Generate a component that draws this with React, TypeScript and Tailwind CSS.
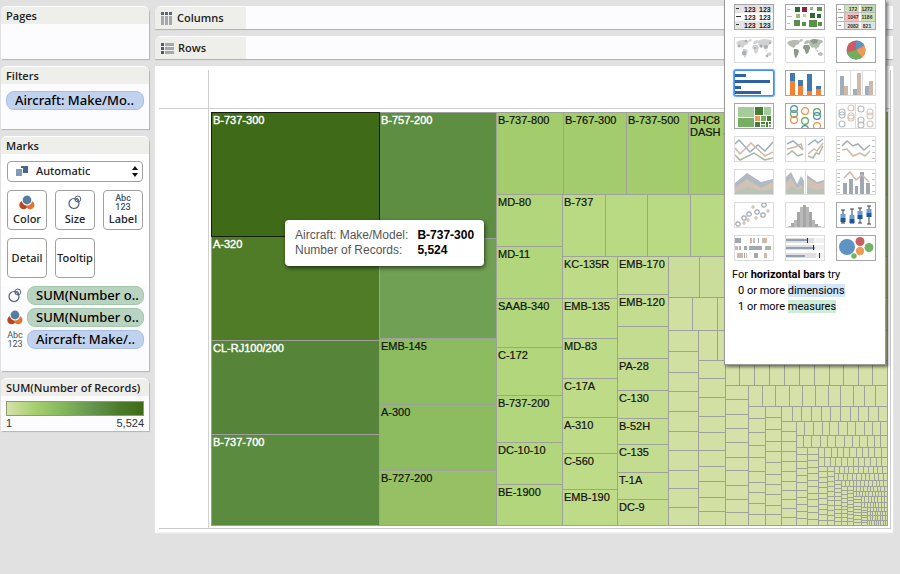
import React from "react";

/* ---------- Treemap data ---------- */

type Cell = {
  x: number;
  y: number;
  w: number;
  h: number;
  fill: string;
  label?: string[];
  light?: boolean;
};

const STROKE = "#9fa29b";
const TAIL = "#d5e1a8";

function stack(x0: number, x1: number, ys: number[], fills: string[], labels: string[] = [], light = false): Cell[] {
  return ys.slice(1).map((y, i) => ({
    x: x0,
    y: ys[i],
    w: x1 - x0,
    h: y - ys[i],
    fill: fills[Math.min(i, fills.length - 1)],
    label: labels[i] ? labels[i].split("|") : undefined,
    light,
  }));
}

function strip(y0: number, y1: number, xs: number[], fill: string, labels: string[] = []): Cell[] {
  return xs.slice(1).map((x, i) => ({
    x: xs[i],
    y: y0,
    w: x - xs[i],
    h: y1 - y0,
    fill,
    label: labels[i] ? labels[i].split("|") : undefined,
  }));
}

function even(from: number, to: number, count: number): number[] {
  return Array.from({ length: count + 1 }, (_, i) => Math.round(from + ((to - from) * i) / count));
}

const R = 676;
const B = 413;

const cells: Cell[] = [
  ...stack(0, 168, [0, 124, 228, 322, B], ["#3f6b18", "#507c28", "#568438", "#5b8b3f"], ["B-737-300", "A-320", "CL-RJ100/200", "B-737-700"], true),
  ...stack(168, 285, [0, 126, 226], ["#5e8e42", "#70a053"], ["B-757-200"], true),
  ...stack(168, 285, [226, 292, 358, B], ["#8dbb60", "#8dbb60", "#95c164"], ["EMB-145", "A-300", "B-727-200"]),
  ...strip(0, 82, [285, 352, 415, 477, 538, 608, R], "#a3cc6d", ["B-737-800", "B-767-300", "B-737-500", "DHC8|DASH 8"]),
  ...stack(285, 351, [82, 134, 186, 235, 283, 330, 372, B], ["#b1d67b"], ["MD-80", "MD-11", "SAAB-340", "C-172", "B-737-200", "DC-10-10", "BE-1900"]),
  ...strip(82, 144, [351, 394, 436, 479, 522, 564, 606, 641, R], "#bad983", ["B-737"]),
  ...stack(351, 406, [144, 186, 226, 266, 305, 341, 377, B], ["#bedb88"], ["KC-135R", "EMB-135", "MD-83", "C-17A", "A-310", "C-560", "EMB-190"]),
  ...stack(406, 457, [144, 182, 214, 246, 278, 306, 332, 360, 387, B], ["#c3dc90"], ["EMB-170", "EMB-120", "", "PA-28", "C-130", "B-52H", "C-135", "T-1A", "DC-9"]),
  ...strip(144, 185, even(457, R, 7), "#cadd9a"),
  ...strip(185, 218, even(457, R, 9), "#cfe0a0"),
  ...stack(457, 487, [218, 239, 260, 279, 299, 319, 338, 358, 376, 395, B], ["#d0e0a2"]),
  ...strip(218, 248, even(487, R, 10), "#d2e0a4"),
  ...stack(487, 514, [248, 266, 285, 304, 320, 338, 354, 369, 385, 399, B], ["#d2e0a4"]),
  ...strip(248, 273, [514, 528, 543, 558, 573, 588, 603, 618, 632, 647, 661, R], TAIL),
  ...stack(514, 537, [273, 287, 302, 316, 330, 345, 358, 373, 387, 400, B], [TAIL]),
  ...strip(273, 294, [537, 551, 564, 578, 591, 604, 617, 629, 642, 653, 664, R], TAIL),
  ...stack(537, 554, [294, 306, 320, 333, 345, 359, 370, 380, 391, 402, B], [TAIL]),
  ...stack(554, 570, [294, 305, 317, 329, 339, 350, 362, 372, 382, 393, 402, B], [TAIL]),
  ...strip(294, 309, [570, 581, 590, 600, 610, 619, 629, 639, 647, 657, 667, R], TAIL),
  ...stack(570, 585, [309, 319, 329, 339, 349, 359, 369, 378, 387, 396, 405, B], [TAIL]),
  ...strip(309, 323, [585, 593, 602, 611, 618, 627, 636, 644, 653, 661, 669, R], TAIL),
  ...strip(323, 335, [585, 592, 600, 609, 616, 624, 633, 641, 648, 656, 663, 669, R], TAIL),
  ...stack(585, 596, even(335, B, 11), [TAIL]),
  ...stack(596, 607, even(335, B, 12), [TAIL]),
  ...strip(335, 345, even(607, R, 11), TAIL),
  ...strip(345, 354, even(607, R, 12), TAIL),
  ...stack(607, 616, even(354, B, 11), [TAIL]),
  ...stack(616, 623, even(354, B, 12), [TAIL]),
  ...strip(354, 361, even(623, R, 11), TAIL),
  ...strip(361, 368, even(623, R, 12), TAIL),
  ...stack(623, 630, even(368, B, 11), [TAIL]),
  ...strip(368, 374, even(630, R, 12), TAIL),
  ...stack(630, 636, even(374, B, 10), [TAIL]),
  ...stack(636, 642, even(374, B, 11), [TAIL]),
  ...strip(374, 379, even(642, R, 10), TAIL),
  ...strip(379, 384, even(642, R, 11), TAIL),
  ...stack(642, 650, even(384, B, 9), [TAIL]),
  ...strip(384, 390, even(650, R, 8), TAIL),
  ...strip(390, 395, even(650, R, 9), TAIL),
  ...stack(650, 656, even(395, B, 7), [TAIL]),
  ...strip(395, 399, even(656, R, 7), TAIL),
  ...strip(399, 403, even(656, R, 8), TAIL),
  ...strip(403, 408, even(656, R, 8), TAIL),
  ...strip(408, B, even(656, R, 9), TAIL),
];

function Treemap() {
  return (
    <svg viewBox="0 0 677 414" className="block h-auto w-full font-['Liberation_Sans',Arial,sans-serif]" role="img" aria-label="Number of records by aircraft make and model">
      <g shapeRendering="crispEdges" stroke={STROKE}>
        {cells.map((c, i) => (
          <rect key={i} x={c.x + 0.5} y={c.y + 0.5} width={c.w} height={c.h} fill={c.fill} />
        ))}
        <rect x={0.5} y={0.5} width={168} height={124} fill="none" stroke="#14200a" />
      </g>
      {cells.map((c, i) =>
        (c.label ?? []).map((line, n) => (
          <text key={`${i}-${n}`} x={c.x + 2} y={c.y + 12 + n * 12} fontSize={11} fill={c.light ? "#ffffff" : "#111111"} stroke={c.light ? "#ffffff" : "#111111"} strokeWidth={c.light ? 0.4 : 0.2}>
            {line}
          </text>
        )),
      )}
    </svg>
  );
}

/* ---------- Small icons ---------- */

function ColorIcon() {
  return (
    <svg width="16" height="15" viewBox="0 0 16 15" aria-hidden="true">
      <circle cx="4.6" cy="10" r="4.3" fill="#b9461c" />
      <circle cx="11.2" cy="10" r="4.3" fill="#e07633" />
      <circle cx="8" cy="5.2" r="5.2" fill="#fff" />
      <circle cx="8" cy="5" r="4.4" fill="#557d9f" />
    </svg>
  );
}

function SizeIcon() {
  return (
    <svg width="14" height="15" viewBox="0 0 14 15" fill="none" stroke="#52627c" aria-hidden="true">
      <circle cx="6" cy="8.5" r="5" strokeWidth="1.2" />
      <circle cx="9.8" cy="4" r="3" />
      <circle cx="9" cy="5" r="1.6" strokeWidth="0.8" />
    </svg>
  );
}

function AbcIcon() {
  return (
    <span aria-hidden="true" className="block text-center font-['Roboto',sans-serif] text-[9px] leading-[9px] text-[#44546c]">
      Abc
      <br />
      123
    </span>
  );
}

function ColumnsIcon() {
  return (
    <svg width="12" height="13" viewBox="0 0 12 13" aria-hidden="true">
      {[0, 4, 8].map((x) => (
        <g key={x}>
          <rect x={x} y="0" width="3" height="3" fill="#5c6672" />
          <rect x={x} y="4" width="3" height="9" fill="#a3a8ae" />
        </g>
      ))}
    </svg>
  );
}

function RowsIcon() {
  return (
    <svg width="13" height="11" viewBox="0 0 13 11" aria-hidden="true">
      {[0, 4, 8].map((y) => (
        <g key={y}>
          <rect x="0" y={y} width="3" height="3" fill="#4d5a68" />
          <rect x="4" y={y} width="9" height="3" fill="#a3a8ae" />
        </g>
      ))}
    </svg>
  );
}

/* ---------- Chart thumbnails ---------- */

const dim = { blue: "#a1adb9", tan: "#cfb8a8", sage: "#a9b8a6", grey: "#a0a9b1" };

const LAND =
  "M2 6l2-2 4-1 4 0 3 1-1 3-3 1-2 3-2-1-2-1-2-2zM14 3l3-1 1 1-2 2zM9 12l3 0 2 2-1 3-2 4-1-1-1-4zM19 7l1-3 3-1 2 1-1 2-3 1zM19 8l5 0 1 3-2 5-2 1-1-4-2-2zM25 3l5-1 7 1 1 2-3 2-1 3-2 1-1 2-2-3-2 1-3-4zM33 16l3-1 2 2-2 2-3-1zM31 13l3 1-2 1z";

function zigzag(points: string, color: string) {
  return <polyline points={points} fill="none" stroke={color} strokeWidth="1.5" />;
}

function Dashes({ x, ys, color = "#c9bcb2" }: { x: number; ys: number[]; color?: string }) {
  return (
    <>
      {ys.map((y) => (
        <rect key={y} x={x} y={y} width="3" height="1" fill={color} />
      ))}
    </>
  );
}

function Ring({ x, y, c, r = 3.4 }: { x: number; y: number; c: string; r?: number }) {
  return <circle cx={x} cy={y} r={r} fill="none" stroke={c} strokeWidth="1.2" />;
}

type Block = [number, number, number, number, string];

function Blocks({ items }: { items: Block[] }) {
  return (
    <>
      {items.map(([x, y, w, h, f], i) => (
        <rect key={i} x={x} y={y} width={w} height={h} fill={f} />
      ))}
    </>
  );
}

const G1 = "#2d6a38";
const G2 = "#5a9148";
const G3 = "#98b97a";

type Thumb = { name: string; on: boolean; art: React.ReactNode };

const thumbs: Thumb[] = [
  {
    name: "text table",
    on: true,
    art: (
      <>
        <Blocks items={[[0, 0, 40, 9, "#e4e4e4"], [0, 17, 40, 9, "#e4e4e4"], [2, 4, 3, 1, "#333"], [2, 12, 5, 1, "#333"], [2, 20, 3, 1, "#333"]]} />
        {[8, 16, 24].map((y) => (
          <g key={y} fontSize="7" fontWeight="700" fill="#222">
            <text x="10" y={y}>123</text>
            <text x="25" y={y}>123</text>
          </g>
        ))}
      </>
    ),
  },
  {
    name: "heat map",
    on: true,
    art: (
      <Blocks
        items={[
          [2, 5, 3, 1, "#bbb"], [2, 12, 5, 1, "#bbb"], [2, 19, 3, 1, "#bbb"],
          [10, 3, 5, 5, G1], [17, 3, 5, 5, "#8c2342"], [25, 3, 3, 3, G3], [32, 3, 5, 4, G2],
          [11, 10, 4, 4, G3], [18, 10, 3, 3, "#bcd39c"], [25, 9, 5, 5, G1], [32, 10, 4, 4, G1],
          [9, 16, 6, 6, G2], [17, 18, 4, 4, G2], [24, 16, 8, 7, G2], [33, 18, 4, 4, G2],
        ]}
      />
    ),
  },
  {
    name: "highlight table",
    on: true,
    art: (
      <>
        <Blocks
          items={[
            [0, 8, 40, 1, "#bbb"], [0, 17, 40, 1, "#bbb"], [8, 0, 1, 26, "#bbb"],
            [9, 0, 14, 8, "#cfe3b8"], [25, 0, 15, 8, "#bfdcaa"], [9, 9, 14, 8, "#f2bfc3"], [25, 9, 15, 8, "#cfe3b8"],
            [9, 18, 14, 8, "#dcdcdc"], [25, 18, 15, 8, "#e2e2e2"],
            [2, 5, 3, 1, "#999"], [2, 13, 5, 1, "#999"], [2, 21, 3, 1, "#999"],
          ]}
        />
        <g fontSize="5" fontWeight="700" fill="#333" textAnchor="middle">
          <text x="17" y="7">172</text>
          <text x="31" y="7">1272</text>
          <text x="17" y="15">1047</text>
          <text x="31" y="15">1186</text>
          <text x="17" y="24">2082</text>
          <text x="31" y="24">821</text>
        </g>
      </>
    ),
  },
  {
    name: "symbol map",
    on: false,
    art: (
      <>
        <path d={LAND} fill="#d2d2d2" />
        {[[5, 9, 1.6], [10, 16, 2.2], [12, 4, 1.2], [27, 9, 1.6], [32, 10, 2], [36, 6, 1.2], [33, 19, 1.4], [21, 11, 1]].map(([x, y, r]) => (
          <circle key={`${x}-${y}`} cx={x} cy={y} r={r} fill="#9aa5ae" fillOpacity="0.8" />
        ))}
      </>
    ),
  },
  {
    name: "filled map",
    on: false,
    art: (
      <>
        <path d={LAND} fill="#b4bbb0" />
        <path d="M9 12l3 0 2 2-1 3-2 4-1-1-1-4zM19 8l5 0 1 3-2 5-2 1-1-4-2-2zM25 3l5-1 3 1-1 3-4 1z" fill="#8c9a88" />
      </>
    ),
  },
  {
    name: "pie chart",
    on: true,
    art: (
      <>
        <circle cx="20" cy="13" r="9.5" fill="#c95d61" />
        <path d="M20 13V3.500A9.500 9.500 0 0 1 28.300 8.400z" fill="#5f93c4" />
        <path d="M20 13L28.300 8.400A9.500 9.500 0 0 1 26 20.400z" fill="#f09a57" />
        <path d="M20 13L26 20.400A9.500 9.500 0 0 1 10.800 15.300z" fill="#6db05f" />
      </>
    ),
  },
  {
    name: "horizontal bars",
    on: true,
    art: <Blocks items={[[1, 4, 11, 3, "#2e62a5"], [1, 10, 35, 3, "#2e62a5"], [1, 16, 6, 3, "#2e62a5"], [1, 21, 26, 3, "#2e62a5"]]} />,
  },
  {
    name: "stacked bars",
    on: true,
    art: (
      <Blocks
        items={[
          [5, 3, 5, 8, "#4078b0"], [5, 11, 5, 15, "#f08236"],
          [13, 10, 5, 6, "#4078b0"], [13, 16, 5, 10, "#f08236"],
          [22, 4, 5, 17, "#4078b0"], [22, 21, 5, 5, "#f08236"],
          [31, 16, 5, 3, "#4078b0"], [31, 19, 5, 7, "#f08236"],
        ]}
      />
    ),
  },
  {
    name: "side-by-side bars",
    on: false,
    art: (
      <Blocks
        items={[
          [14, 0, 1, 26, "#ddd"], [26, 0, 1, 26, "#ddd"],
          [4, 6, 4, 20, dim.blue], [8, 16, 4, 10, dim.tan],
          [17, 19, 4, 7, dim.blue], [21, 3, 4, 23, dim.tan],
          [29, 16, 4, 10, dim.blue], [33, 11, 4, 15, dim.tan],
        ]}
      />
    ),
  },
  {
    name: "treemap",
    on: true,
    art: (
      <Blocks
        items={[
          [4, 4, 16, 10, "#a5cd9a"], [4, 15, 16, 9, "#76ae64"], [21, 4, 8, 8, "#467d35"], [30, 4, 7, 8, "#a5cd9a"],
          [21, 13, 5, 5, "#f09a57"], [21, 19, 5, 5, "#467d35"], [27, 13, 5, 5, "#76ae64"], [33, 13, 4, 5, "#467d35"],
          [27, 19, 4, 2, "#467d35"], [27, 22, 4, 2, "#76ae64"], [32, 19, 2, 5, "#467d35"], [35, 19, 2, 2, "#467d35"], [35, 22, 2, 2, "#76ae64"],
        ]}
      />
    ),
  },
  {
    name: "circle views",
    on: true,
    art: (
      <>
        <Ring x={9} y={6} c="#4d8bbd" />
        <Ring x={9} y={11} c="#5aa653" />
        <Ring x={9} y={17} c="#f0924a" />
        <Ring x={20} y={8} c="#f0924a" />
        <Ring x={20} y={18} c="#5aa653" />
        <Ring x={20} y={26} c="#4d8bbd" />
        <Ring x={32} y={9} c="#5aa653" />
        <Ring x={32} y={13} c="#4d8bbd" />
        <Ring x={32} y={23} c="#f0924a" />
      </>
    ),
  },
  {
    name: "side-by-side circles",
    on: false,
    art: (
      <>
        <rect x="19" y="0" width="1" height="26" fill="#ddd" />
        <Ring x={6} y={9} c="#b3bcc4" r={3} />
        <Ring x={6} y={12} c="#b3bcc4" r={3} />
        <Ring x={6} y={21} c="#b3bcc4" r={3} />
        <Ring x={15} y={5} c="#d8c7bb" r={3} />
        <Ring x={15} y={13} c="#d8c7bb" r={3} />
        <Ring x={15} y={15} c="#d8c7bb" r={3} />
        <Ring x={25} y={6} c="#b3bcc4" r={3} />
        <Ring x={25} y={17} c="#b3bcc4" r={3} />
        <Ring x={25} y={22} c="#b3bcc4" r={3} />
        <Ring x={34} y={9} c="#d8c7bb" r={3} />
        <Ring x={34} y={13} c="#d8c7bb" r={3} />
        <Ring x={34} y={21} c="#d8c7bb" r={3} />
      </>
    ),
  },
  {
    name: "continuous lines",
    on: false,
    art: (
      <>
        {zigzag("1,8 5,4 16,16 24,9 31,15 39,6", dim.blue)}
        {zigzag("1,12 6,18 17,7 31,20 39,16", dim.tan)}
        {zigzag("1,19 6,24 20,17 31,24 39,22", dim.sage)}
      </>
    ),
  },
  {
    name: "discrete lines",
    on: false,
    art: (
      <>
        <rect x="20" y="0" width="1" height="26" fill="#ddd" />
        {zigzag("2,8 8,5 13,9 18,14", dim.blue)}
        {zigzag("2,13 10,11 16,8 18,14", dim.tan)}
        {zigzag("2,19 7,15 13,20 18,18", dim.sage)}
        {zigzag("23,9 30,4 33,7 38,3", dim.blue)}
        {zigzag("23,18 29,13 32,15 38,7", dim.tan)}
        {zigzag("23,20 28,22 31,17 34,18 38,10", dim.sage)}
      </>
    ),
  },
  {
    name: "dual lines",
    on: false,
    art: (
      <>
        <Dashes x={1} ys={[4, 8, 12, 16, 20, 23]} />
        <Dashes x={36} ys={[4, 10, 16, 22]} color="#bfc5cb" />
        {zigzag("6,10 11,5 17,10 22,8 28,14 34,9", dim.blue)}
        {zigzag("6,14 11,13 17,20 24,17 29,20 34,15", dim.tan)}
      </>
    ),
  },
  {
    name: "area chart",
    on: false,
    art: (
      <>
        <path d="M1 14L13 4l14 9 12-3v15H1z" fill="#b1bac2" />
        <path d="M1 19l12-9 14 9 12-6v12H1z" fill="#d2c2b5" />
        <path d="M1 23l12-5 14 4 12-2v5H1z" fill="#b9c4b6" />
      </>
    ),
  },
  {
    name: "discrete area chart",
    on: false,
    art: (
      <>
        <path d="M1 8l5-5 6 12 4-8 3 5v13H1zM22 6l10 7 7-2v14H22z" fill="#b1bac2" />
        <path d="M1 14l5-5 6 10 4-3 3 3v6H1zM22 9l10 6 7-2v12H22z" fill="#d2c2b5" />
        <path d="M1 21l5-4 7 4 6-2v6H1zM22 18l10 3 7-1v5H22z" fill="#b9c4b6" />
        <rect x="20" y="0" width="1" height="26" fill="#ddd" />
      </>
    ),
  },
  {
    name: "dual combination",
    on: false,
    art: (
      <>
        <Dashes x={1} ys={[4, 8, 12, 16, 20, 23]} />
        <Dashes x={36} ys={[4, 10, 16, 22]} color="#bfc5cb" />
        <Blocks items={[[7, 14, 4, 12, dim.grey], [13, 10, 4, 16, dim.grey], [19, 17, 3, 9, dim.grey], [24, 3, 4, 23, dim.grey], [30, 14, 4, 12, dim.grey]]} />
        {zigzag("8,9 14,3 20,11 26,6 33,13", dim.tan)}
      </>
    ),
  },
  {
    name: "scatter plots",
    on: false,
    art: (
      <>
        {[[4, 22], [10, 16], [15, 12], [23, 10], [29, 13], [30, 3]].map(([x, y]) => (
          <Ring key={x} x={x} y={y} c={dim.grey} r={2.2} />
        ))}
        <path d="M8 21h4M10 19v4M12 18h4M14 16v4M20 16h4M22 14v4M17 5h4M19 3v4M32 9h4M34 7v4" stroke={dim.tan} strokeWidth="1.2" />
      </>
    ),
  },
  {
    name: "histogram",
    on: false,
    art: (
      <Blocks
        items={[24, 21, 18, 10, 5, 3, 5, 10, 18, 22, 24].map((y, i): Block => [3 + i * 3, y, 3, 26 - y, i % 2 ? "#a6a6a6" : "#b8b8b8"])}
      />
    ),
  },
  {
    name: "box-and-whisker plot",
    on: true,
    art: (
      <>
        {[[7, 8, 21, 12], [16, 7, 21, 13], [24, 6, 21, 9], [33, 4, 22, 7]].map(([x, t, b, y]) => (
          <g key={x}>
            <path d={`M${x} ${t}V${b}M${x - 2} ${t}h4M${x - 2} ${b}h4`} stroke="#333f50" strokeWidth="1" />
            <rect x={x - 2.5} y={y} width="5" height="4" fill="#6d9fd4" />
            <rect x={x - 2.5} y={y + 4} width="5" height="4" fill="#1f5796" />
          </g>
        ))}
      </>
    ),
  },
  {
    name: "gantt chart",
    on: false,
    art: (
      <Blocks
        items={[
          [1, 3, 6, 5, dim.grey], [16, 3, 2, 5, dim.tan], [19, 3, 2, 5, dim.tan], [24, 3, 1, 5, dim.grey], [28, 3, 5, 5, dim.tan],
          [1, 11, 3, 4, dim.tan], [5, 11, 2, 4, dim.sage], [10, 11, 3, 4, dim.grey], [15, 11, 13, 4, dim.grey], [31, 11, 6, 4, dim.sage],
          [3, 18, 6, 5, dim.tan], [10, 18, 1, 5, dim.grey], [12, 18, 1, 5, dim.tan], [20, 18, 4, 5, dim.grey], [30, 18, 3, 5, dim.tan],
        ]}
      />
    ),
  },
  {
    name: "bullet graph",
    on: false,
    art: (
      <Blocks
        items={[
          [1, 3, 38, 5, "#f1f1f1"], [1, 3, 28, 5, "#dddfe2"], [1, 4, 21, 2, "#93a0ac"], [22, 3, 1, 5, "#333"],
          [1, 10, 38, 5, "#f1f1f1"], [1, 10, 29, 5, "#dddfe2"], [1, 12, 29, 2, "#93a0ac"], [28, 10, 1, 5, "#333"],
          [1, 18, 38, 5, "#f1f1f1"], [1, 18, 30, 5, "#dddfe2"], [1, 20, 19, 2, "#93a0ac"], [34, 18, 1, 5, "#333"],
        ]}
      />
    ),
  },
  {
    name: "packed bubbles",
    on: true,
    art: (
      <>
        <circle cx="11" cy="12" r="8" fill="#5f93c4" />
        <circle cx="24" cy="6.500" r="4.500" fill="#c95d61" />
        <circle cx="33" cy="12.500" r="4.500" fill="#74b266" />
        <circle cx="24" cy="16" r="4.200" fill="#f09a57" />
        <circle cx="18" cy="21" r="2.700" fill="#74b266" />
      </>
    ),
  },
];

/* ---------- Building blocks ---------- */

function Panel({ title, children, className = "" }: { title: string; children?: React.ReactNode; className?: string }) {
  return (
    <section className={`rounded-t-md bg-[#fcfcfe] shadow-[1px_1px_1px_#b4b4b4] ${className}`}>
      <h2 className="h-[18px] rounded-t-md border-t border-white bg-[#eeefeb] px-[5px] font-['Open_Sans',sans-serif] text-[11px] leading-[17px] font-semibold text-[#222]">{title}</h2>
      {children}
    </section>
  );
}

function Pill({ tone, children }: { tone: "blue" | "green"; children: string }) {
  const color = tone === "blue" ? "border-[#a9bfe4] bg-[#c1d2ef]" : "border-[#a5c7ae] bg-[#b8d4c0]";
  return (
    <button type="button" className={`h-[19px] w-full overflow-hidden rounded-[8px] border px-2 text-left text-[13px] leading-[17px] font-medium whitespace-nowrap text-black ${color}`}>
      {children}
    </button>
  );
}

function MarkButton({ icon, children }: { icon?: React.ReactNode; children: string }) {
  return (
    <button type="button" className="flex h-10 flex-col items-center justify-center rounded-[4px] border border-[#a0a0a0] bg-white text-[11px] leading-4 font-medium text-[#222]">
      {icon && <span className="flex h-[18px] items-center pt-px">{icon}</span>}
      {children}
    </button>
  );
}

function Shelf({ title, icon }: { title: string; icon: React.ReactNode }) {
  return (
    <section className="flex h-[23px] overflow-hidden rounded-tl-md bg-[#fcfcfe] shadow-[0_1px_1px_#b0b0b0]">
      <h2 className="flex w-[91px] items-center gap-1 border-t border-white bg-[#eeefeb] pl-[6px] font-['Open_Sans',sans-serif] text-[11px] font-semibold text-[#222]">
        {icon}
        {title}
      </h2>
    </section>
  );
}

function ShowMe() {
  return (
    <aside aria-label="Show Me" className="absolute top-0 right-[14px] h-[365px] w-[162px] border border-t-0 border-[#9a9a9a] bg-white pt-1 pl-[9px] shadow-[2px_2px_3px_rgba(0,0,0,0.5)]">
      <div className="grid grid-cols-[repeat(3,40px)] gap-x-[11px] gap-y-[7px]">
        {thumbs.map((t) => (
          <button
            key={t.name}
            type="button"
            aria-label={t.name}
            className={`h-[26px] w-10 border bg-white ${
              t.name === "horizontal bars"
                ? "rounded-[2px] border-[#3f8cf5] shadow-[0_0_1px_1px_#5c9ffb]"
                : t.on
                  ? "border-[#a6a6a6]"
                  : "border-[#dcdcdc]"
            }`}
          >
            <svg viewBox="1 1 38 24" className="block h-full w-full font-['Liberation_Sans',Arial,sans-serif]" aria-hidden="true">
              {t.art}
            </svg>
          </button>
        ))}
      </div>
      <div className="-ml-[2px] pt-[6px] font-['Roboto',sans-serif] text-[11px] leading-4 text-black">
        <p>
          For <b>horizontal bars</b> try
        </p>
        <p className="pl-[6px]">
          0 or more <span className="bg-[#d2e5fb]">dimensions</span>
        </p>
        <p className="pl-[6px]">
          1 or more <span className="bg-[#cdebd6]">measures</span>
        </p>
      </div>
    </aside>
  );
}

function Tooltip() {
  return (
    <div role="tooltip" className="absolute top-[154px] left-[130px] rounded-[4px] bg-white px-[10px] py-2 font-['Liberation_Sans',Arial,sans-serif] text-[12px] leading-[15px] shadow-[1px_2px_4px_rgba(0,0,0,0.6)]">
      <dl className="grid grid-cols-[auto_auto] gap-x-[9px] whitespace-nowrap">
        <dt className="text-[#555]">Aircraft: Make/Model:</dt>
        <dd className="font-bold text-black">B-737-300</dd>
        <dt className="text-[#555]">Number of Records:</dt>
        <dd className="font-bold text-black">5,524</dd>
      </dl>
    </div>
  );
}

/* ---------- Page ---------- */

export default function App() {
  return (
    <div className="relative flex min-h-screen items-start gap-[6px] bg-[#e1e1e1] pt-[6px] pr-[7px] pl-px font-['Noto_Sans',sans-serif]">
      <div className="flex w-[148px] shrink-0 flex-col gap-[7px]">
        <Panel title="Pages" className="h-[53px]" />
        <Panel title="Filters" className="h-[63px]">
          <div className="px-[5px] pt-[3px]">
            <Pill tone="blue">Aircraft: Make/Mo..</Pill>
          </div>
        </Panel>
        <Panel title="Marks" className="pb-[22px]">
          <div className="bg-white px-[6px] pt-[7px] pb-[8px]">
            <div className="relative">
              <select aria-label="Mark type" defaultValue="auto" className="block h-[21px] w-full appearance-none rounded-[4px] border border-[#a0a0a0] bg-white pl-7 text-[11px] font-medium text-[#222]">
                <option value="auto">Automatic</option>
              </select>
              <svg className="pointer-events-none absolute top-1 left-2" width="14" height="12" viewBox="0 0 14 12" aria-hidden="true">
                <rect x="6" y="1" width="7" height="7" fill="#46678c" />
                <rect x="0" y="3" width="8" height="8" fill="#fff" />
                <rect x="1" y="4" width="6" height="7" fill="#7f9bb8" />
              </svg>
              <svg className="pointer-events-none absolute top-[5px] right-[5px]" width="6" height="11" viewBox="0 0 6 11" aria-hidden="true">
                <path d="M3 0l3 4H0zM3 11L0 7h6z" fill="#111" />
              </svg>
            </div>
            <div className="mt-2 grid grid-cols-3 gap-2">
              <MarkButton icon={<ColorIcon />}>Color</MarkButton>
              <MarkButton icon={<SizeIcon />}>Size</MarkButton>
              <MarkButton icon={<AbcIcon />}>Label</MarkButton>
              <MarkButton>Detail</MarkButton>
              <MarkButton>Tooltip</MarkButton>
            </div>
          </div>
          <div className="grid grid-cols-[16px_1fr] items-center justify-items-center gap-x-1 gap-y-[3px] pr-[5px] pl-[6px]">
            <SizeIcon />
            <Pill tone="green">SUM(Number o..</Pill>
            <ColorIcon />
            <Pill tone="green">SUM(Number o..</Pill>
            <AbcIcon />
            <Pill tone="blue">Aircraft: Make/..</Pill>
          </div>
        </Panel>
        <Panel title="SUM(Number of Records)">
          <div className="px-[5px] pt-[5px] font-['Liberation_Sans',Arial,sans-serif]">
            <div className="h-[15px] border border-[#8c9a78] bg-[linear-gradient(90deg,#d5e1a8,#a6d070_20%,#86b85c_40%,#65964f_62%,#4c7c2a_82%,#3f6b18)]" />
            <div className="flex justify-between text-[11px] leading-[15px] text-[#333]">
              <span>1</span>
              <span>5,524</span>
            </div>
          </div>
        </Panel>
      </div>

      <main className="flex min-w-0 flex-1 flex-col gap-[7px]">
        <Shelf title="Columns" icon={<ColumnsIcon />} />
        <Shelf title="Rows" icon={<RowsIcon />} />
        <section className="relative bg-white pt-1 pr-[2px] pb-[3px] pl-1 shadow-[0_1px_1px_#f5f5f5]">
          <div className="grid grid-cols-[50px_1fr] grid-rows-[39px_auto] border-r border-b border-[#c9c9c9]">
            <div className="border-r border-b border-[#cfcfcf]" />
            <div className="border-b border-[#cfcfcf]" />
            <div className="border-r border-[#cfcfcf]" />
            <div className="pt-[3px] pr-[2px] pb-[2px] pl-[2px]">
              <Treemap />
            </div>
          </div>
          <Tooltip />
        </section>
      </main>

      <ShowMe />
    </div>
  );
}
